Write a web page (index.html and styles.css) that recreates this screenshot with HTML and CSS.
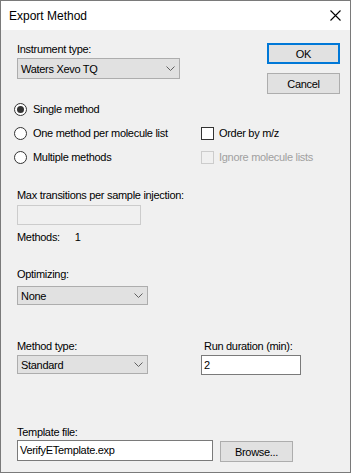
FILE: index.html
```html
<!DOCTYPE html>
<html lang="en">
<head>
    <meta charset="UTF-8">
    <title>Export Method</title>
    <link rel="stylesheet" href="styles.css">
</head>
<body>
    <div class="window">
        <div class="titlebar">
            <span class="title">Export Method</span>
            <svg class="close" width="11" height="11" viewBox="0 0 11 11">
                <path d="M0.5 0.5 L10.5 10.5 M10.5 0.5 L0.5 10.5" stroke="#000" stroke-width="1.1" fill="none"/>
            </svg>
        </div>

        <div class="content">
            <!-- Instrument + dialog buttons -->
            <div class="top-row">
                <div class="field">
                    <div class="label">Instrument type:</div>
                    <div class="combo combo-instrument">
                        <span>Waters Xevo TQ</span>
                        <svg class="chevron" width="9" height="5" viewBox="0 0 9 5"><path d="M0.5 0.5 L4.5 4.5 L8.5 0.5" stroke="#606060" fill="none"/></svg>
                    </div>
                </div>
                <div class="buttons">
                    <button class="btn btn-default">OK</button>
                    <button class="btn">Cancel</button>
                </div>
            </div>

            <!-- Method options -->
            <div class="options">
                <div class="radio checked"><span class="radio-dot"></span>Single method</div>
                <div></div>
                <div class="radio"><span class="radio-dot"></span>One method per molecule list</div>
                <div class="check"><span class="box"></span>Order by m/z</div>
                <div class="radio"><span class="radio-dot"></span>Multiple methods</div>
                <div class="check disabled"><span class="box"></span>Ignore molecule lists</div>
            </div>

            <div class="label label-max">Max transitions per sample injection:</div>
            <div class="textbox textbox-disabled"></div>

            <div class="methods-count"><span>Methods:</span><span class="count">1</span></div>

            <div class="label label-optimizing">Optimizing:</div>
            <div class="combo combo-small">
                <span>None</span>
                <svg class="chevron" width="9" height="5" viewBox="0 0 9 5"><path d="M0.5 0.5 L4.5 4.5 L8.5 0.5" stroke="#606060" fill="none"/></svg>
            </div>

            <div class="method-row">
                <div class="method-col">
                    <div class="label">Method type:</div>
                    <div class="combo combo-small">
                        <span>Standard</span>
                        <svg class="chevron" width="9" height="5" viewBox="0 0 9 5"><path d="M0.5 0.5 L4.5 4.5 L8.5 0.5" stroke="#606060" fill="none"/></svg>
                    </div>
                </div>
                <div class="duration-col">
                    <div class="label label-duration">Run duration (min):</div>
                    <div class="textbox textbox-duration">2</div>
                </div>
            </div>

            <div class="label label-template">Template file:</div>
            <div class="template-row">
                <div class="textbox textbox-template">VerifyETemplate.exp</div>
                <button class="btn btn-browse">Browse...</button>
            </div>
        </div>
    </div>
</body>
</html>
```

FILE: styles.css
```css
body {
    margin: 0;
    padding: 0;
    font-family: "Liberation Sans", Arial, sans-serif;
    font-size: 11px;
    letter-spacing: -0.3px;
    color: #000;
}

.window {
    width: 351px;
    height: 473px;
    box-sizing: border-box;
    border: 1px solid #7a7a7a;
    display: flex;
    flex-direction: column;
    background: #f0f0f0;
}

/* Title bar */
.titlebar {
    height: 29px;
    background: #fff;
    display: flex;
    align-items: center;
    justify-content: space-between;
    padding: 0 9px 0 8px;
    flex-shrink: 0;
}

.title {
    font-size: 12px;
    letter-spacing: 0;
}

.close {
    display: block;
    margin-top: -1px;
}

/* Body */
.content {
    flex: 1;
    padding: 13px 10px 0 16px;
}

.label {
    line-height: 13px;
}

.top-row {
    display: flex;
    justify-content: space-between;
    height: 51px;
}

.combo {
    box-sizing: border-box;
    height: 21px;
    background: #e1e1e1;
    border: 1px solid #adadad;
    display: flex;
    align-items: center;
    justify-content: space-between;
    padding: 0 4px 0 3px;
}

.combo-instrument {
    width: 163px;
    margin-top: 2px;
}

.combo-small {
    width: 131px;
    height: 19px;
}

.chevron {
    display: block;
}

.buttons {
    display: flex;
    flex-direction: column;
    gap: 9px;
}

.btn {
    box-sizing: border-box;
    width: 73px;
    height: 21px;
    padding: 0;
    font-family: inherit;
    font-size: 11px;
    letter-spacing: -0.3px;
    color: #000;
    background: #e1e1e1;
    border: 1px solid #adadad;
}

.btn-default {
    border: 2px solid #0078d7;
}

/* Radio buttons and checkboxes */
.options {
    display: grid;
    grid-template-columns: 187px 1fr;
    grid-auto-rows: 24px;
    margin: 3px 0 0 -3px;
}

.radio,
.check {
    display: flex;
    align-items: center;
}

.radio-dot {
    box-sizing: border-box;
    width: 13px;
    height: 13px;
    border: 1px solid #333;
    border-radius: 50%;
    background: #fff;
    margin-right: 6px;
    display: flex;
    align-items: center;
    justify-content: center;
}

.radio.checked .radio-dot::after {
    content: "";
    width: 7px;
    height: 7px;
    border-radius: 50%;
    background: #333;
}

.check .box {
    box-sizing: border-box;
    width: 13px;
    height: 13px;
    border: 1px solid #333;
    background: #fff;
    margin-right: 5px;
}

.check.disabled {
    color: #a0a0a0;
}

.check.disabled .box {
    border-color: #ccc;
    background: #f0f0f0;
}

/* Text boxes */
.textbox {
    box-sizing: border-box;
    height: 20px;
    background: #fff;
    border: 1px solid #7a7a7a;
    line-height: 18px;
    padding-left: 2px;
}

.label-max {
    margin-top: 20px;
}

.textbox-disabled {
    width: 124px;
    margin-top: 3px;
    background: #f0f0f0;
    border-color: #ccc;
}

.methods-count {
    margin-top: 6px;
    line-height: 13px;
}

.methods-count .count {
    margin-left: 15px;
}

.label-optimizing {
    margin-top: 24px;
}

.label-optimizing + .combo {
    margin-top: 5px;
}

.method-row {
    display: flex;
    margin-top: 35px;
}

.method-col {
    width: 184px;
}

.method-col .combo {
    margin-top: 2px;
}

.label-duration {
    margin-left: 3px;
}

.textbox-duration {
    width: 100px;
    margin-top: 2px;
}

.label-template {
    margin-top: 51px;
}

.template-row {
    display: flex;
    align-items: flex-start;
    gap: 7px;
    margin-top: 1px;
}

.textbox-template {
    width: 196px;
    height: 21px;
    line-height: 19px;
}

.btn-browse {
    margin-top: 1px;
}
```
